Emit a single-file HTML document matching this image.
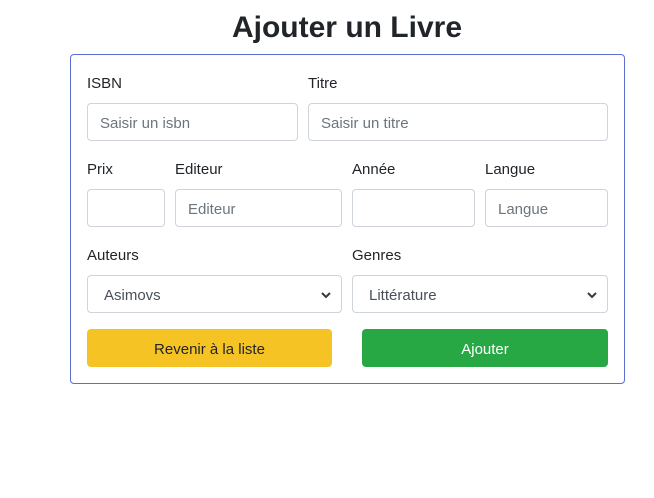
<!DOCTYPE html>
<html><head><meta charset="utf-8"><style>
body{margin:0;width:654px;height:498px;background:#fff;font-family:"Liberation Sans",sans-serif;color:#212529;position:relative;overflow:hidden}
.a{position:absolute}
h1{position:absolute;margin:0;left:0;width:694px;text-align:center;top:11px;font-size:30px;font-weight:bold;color:#212529}
.card{left:70px;top:54px;width:553px;height:328px;border:1px solid #5b6fd1;border-radius:4px}
.l{font-size:15px;line-height:20px}
.i{box-sizing:border-box;height:38px;border:1px solid #ced4da;border-radius:4px;font-size:15px;line-height:40px;padding-left:12px;color:#6c757d;background:#fff}
.s{color:#495057;padding-left:16px}
.s svg{position:absolute;right:10px;top:15px}
.b{height:38px;border-radius:4px;font-size:15px;line-height:41px;text-align:center}
</style></head><body>
<h1>Ajouter un Livre</h1>
<div class="a card"></div>
<div class="a l" style="left:87px;top:74px">ISBN</div>
<div class="a l" style="left:308px;top:74px">Titre</div>
<div class="a i" style="left:87px;top:103px;width:211px">Saisir un isbn</div>
<div class="a i" style="left:308px;top:103px;width:300px">Saisir un titre</div>
<div class="a l" style="left:87px;top:160px">Prix</div>
<div class="a l" style="left:175px;top:160px">Editeur</div>
<div class="a l" style="left:352px;top:160px">Année</div>
<div class="a l" style="left:485px;top:160px">Langue</div>
<div class="a i" style="left:87px;top:189px;width:78px"></div>
<div class="a i" style="left:175px;top:189px;width:167px">Editeur</div>
<div class="a i" style="left:352px;top:189px;width:123px"></div>
<div class="a i" style="left:485px;top:189px;width:123px">Langue</div>
<div class="a l" style="left:87px;top:246px">Auteurs</div>
<div class="a l" style="left:352px;top:246px">Genres</div>
<div class="a i s" style="left:87px;top:275px;width:255px">Asimovs<svg width="10" height="8" viewBox="0 0 10 8"><path d="M1 2l4 4 4-4" stroke="#343a40" stroke-width="2" fill="none"/></svg></div>
<div class="a i s" style="left:352px;top:275px;width:256px">Littérature<svg width="10" height="8" viewBox="0 0 10 8"><path d="M1 2l4 4 4-4" stroke="#343a40" stroke-width="2" fill="none"/></svg></div>
<div class="a b" style="left:87px;top:329px;width:245px;background:#f5c324;color:#212529">Revenir à la liste</div>
<div class="a b" style="left:362px;top:329px;width:246px;background:#28a745;color:#fff">Ajouter</div>
</body></html>
